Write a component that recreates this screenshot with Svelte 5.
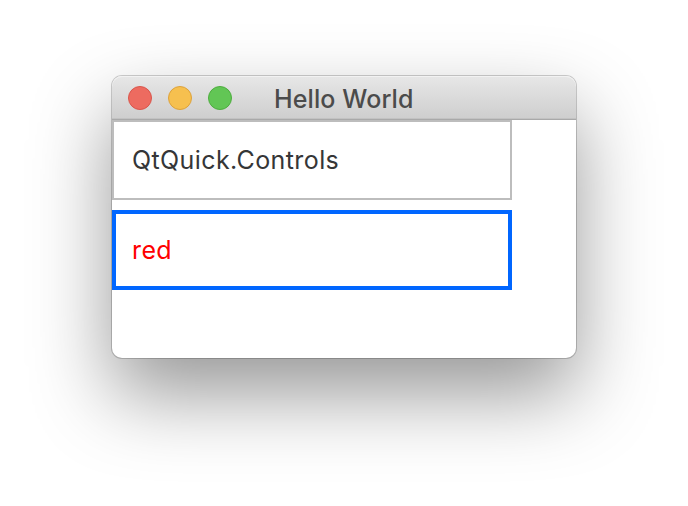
<script>
  const lights = ['close', 'minimize', 'zoom'];
  const title = 'Hello World';
</script>

<main class="desktop">
  <section class="window">
    <header class="titlebar">
      <div class="lights">
        {#each lights as light}
          <span class="light {light}"></span>
        {/each}
      </div>
      <h1>{title}</h1>
    </header>
    <div class="content">
      <div class="field">QtQuick.Controls</div>
      <div class="field focused">red</div>
    </div>
  </section>
</main>

<style>
  :global(body) { margin: 0; background: #fff; }
  .desktop {
    box-sizing: border-box;
    width: 688px;
    height: 506px;
    padding: 76px 0 0 112px;
    overflow: hidden;
    background: #fff;
    font-family: Inter, "Liberation Sans", sans-serif;
  }
  .window {
    width: 464px;
    height: 282px;
    border-radius: 10px;
    background: #fff;
    box-shadow: 0 0 0 1px rgba(0, 0, 0, 0.19), 0 36px 80px rgba(0, 0, 0, 0.41);
  }
  .titlebar {
    box-sizing: border-box;
    display: flex;
    align-items: center;
    height: 44px;
    padding-left: 16px;
    border-bottom: 1px solid #a9a9a9;
    border-radius: 10px 10px 0 0;
    background: linear-gradient(#e7e7e7, #cecece);
    box-shadow: inset 0 1px 0 #f2f2f2, inset 0 -1px 0 #c2c2c2;
  }
  .lights { display: flex; gap: 16px; padding-top: 1px; }
  .light {
    box-sizing: border-box;
    width: 24px;
    height: 24px;
    border: 1px solid;
    border-radius: 50%;
  }
  .close { background: #ed6b60; border-color: #d9564c; }
  .minimize { background: #f6c04f; border-color: #dda23c; }
  .zoom { background: #62c655; border-color: #4ead3f; }
  h1 {
    margin: 2px 0 0 42px;
    font-size: 25px;
    line-height: 30px;
    font-weight: 450;
    letter-spacing: 0.1px;
    color: #4b4b4b;
    white-space: nowrap;
  }
  .content { display: flex; flex-direction: column; gap: 10px; }
  .field {
    box-sizing: border-box;
    display: flex;
    align-items: center;
    width: 400px;
    height: 80px;
    padding-left: 18px;
    border: 2px solid #bdbdbd;
    background: #fff;
    color: #353637;
    font-size: 25px;
    letter-spacing: 0.4px;
  }
  .focused { padding-left: 16px; border: 4px solid #0066ff; color: #f00; }
</style>
